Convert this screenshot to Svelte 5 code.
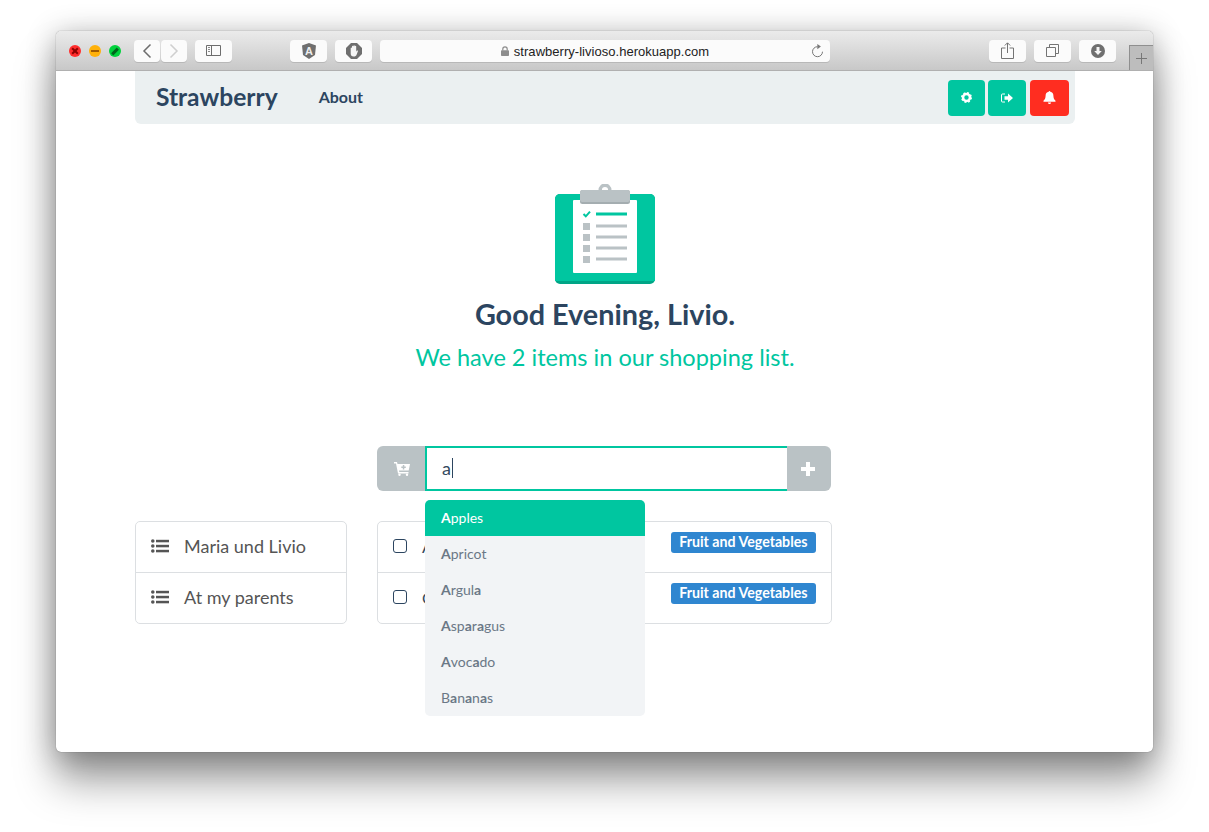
<script>
  const suggestions = ['Apples', 'Apricot', 'Argula', 'Asparagus', 'Avocado', 'Bananas'];
  const lists = ['Maria und Livio', 'At my parents'];
  const items = ['Apples', 'Carrots'];

  // matched letters of the query are drawn heavier
  const parts = (word) => word.split(/(a)/i).filter(Boolean);
</script>

<div class="desktop">
  <div class="window">
    <header class="titlebar">
      <div class="lights">
        <span class="light red"></span>
        <span class="light yellow"></span>
        <span class="light green"></span>
      </div>
      <div class="nav-buttons">
        <span class="tb back">
          <svg width="10" height="16" viewBox="0 0 10 16"><path d="M8.500 1.500 2 8l6.500 6.500" fill="none" stroke="#6d6d6d" stroke-width="1.500"/></svg>
        </span>
        <span class="tb back">
          <svg width="10" height="16" viewBox="0 0 10 16"><path d="M1.500 1.500 8 8l-6.500 6.500" fill="none" stroke="#cfcfcf" stroke-width="1.500"/></svg>
        </span>
      </div>
      <span class="tb wide sidebar">
        <svg width="15" height="11" viewBox="0 0 15 11"><path d="M.5.5h14v10H.5zM5.500.5v10" fill="none" stroke="#6d6d6d"/><path d="M2 2.500h2M2 4.500h2M2 6.500h2" stroke="#8a8a8a"/></svg>
      </span>
      <span class="tb wide angular">
        <svg width="14" height="16" viewBox="0 0 14 16">
          <path d="M7 0 14 2.500 13 12 7 16 1 12 0 2.500z" fill="#6f6f6f"/>
          <text x="7" y="12" text-anchor="middle" class="shield-letter">A</text>
        </svg>
      </span>
      <span class="tb wide hand">
        <svg width="16" height="16" viewBox="0 0 16 16">
          <path d="M5 0h6l5 5v6l-5 5H5l-5-5V5z" fill="#6f6f6f"/>
          <path d="M4.700 5.200c0-1 1.300-1 1.300 0V3.400c0-1 1.400-1 1.400 0V2.900c0-1 1.400-1 1.400 0v.7c0-1 1.400-1 1.400 0v5.200l.5-1c.5-.8 1.500-.3 1.200.5l-1.300 3.400c-.4 1-1.300 1.800-2.900 1.800H7.500C5.700 13.500 4.700 12.400 4.700 10.500z" fill="#f5f5f5"/>
        </svg>
      </span>
      <div class="url">
        <svg class="lock" width="8" height="10" viewBox="0 0 8 10"><path d="M1.800 4.500V3a2.200 2.200 0 0 1 4.400 0v1.500" fill="none" stroke="#8d8d8d" stroke-width="1.200"/><rect y="4.300" width="8" height="5.700" rx=".8" fill="#8d8d8d"/></svg>
        <span class="host">strawberry-livioso.herokuapp.com</span>
        <svg class="reload" width="13" height="14" viewBox="0 0 13 14"><path d="M6.500 2.700a5 5 0 1 0 5 5" fill="none" stroke="#777" stroke-width="1"/><path d="M6.300 0v5.200l3.600-2.600z" fill="#777"/></svg>
      </div>
      <span class="tb wide share">
        <svg width="13" height="17" viewBox="0 0 13 17"><path d="M4.500 6H.5v10.500h12V6h-4M6.500 11V1M3.800 3.500 6.500.8l2.700 2.700" fill="none" stroke="#747474"/></svg>
      </span>
      <span class="tb wide">
        <svg width="13" height="13" viewBox="0 0 13 13"><path d="M.5 3.500h9v9h-9zM3.500 3.500v-3h9v9h-3" fill="none" stroke="#747474"/></svg>
      </span>
      <span class="tb wide">
        <svg width="14" height="14" viewBox="0 0 14 14"><circle cx="7" cy="7" r="7" fill="#6f6f6f"/><path d="M5.500 3h3v4h2.300L7 11 3.200 7h2.300z" fill="#f5f5f5"/></svg>
      </span>
      <span class="new-tab">
        <svg width="11" height="11" viewBox="0 0 11 11"><path d="M5.500 0v11M0 5.500h11" stroke="#777"/></svg>
      </span>
    </header>

    <main class="page">
      <nav class="navbar">
        <span class="brand">Strawberry</span>
        <a class="nav-link" href="#about">About</a>
        <div class="nav-actions">
          <button class="action teal cog">
            <svg width="11" height="11" viewBox="0 0 12 12">
              <circle cx="6" cy="6" r="3.800" fill="none" stroke="#fff" stroke-width="2.800"/>
              <circle cx="6" cy="6" r="5" fill="none" stroke="#fff" stroke-width="2" stroke-dasharray="2 1.930"/>
            </svg>
          </button>
          <button class="action teal logout">
            <svg width="12" height="10" viewBox="0 0 12 10">
              <path d="M4 1H1.500a1 1 0 0 0-1 1v6a1 1 0 0 0 1 1H4" fill="none" stroke="#fff"/>
              <path d="M3.500 3.300h3.500V.6L12 5 7 9.400V6.700H3.500z" fill="#fff"/>
            </svg>
          </button>
          <button class="action red-btn">
            <svg width="13" height="13" viewBox="0 0 13 13">
              <path d="M6.500 0c.5 0 .8.300.8.800 2 .4 3.100 1.900 3.100 4 0 2.300.8 3.800 2.100 5v.9H.5v-.9c1.300-1.200 2.100-2.700 2.100-5 0-2.100 1.100-3.600 3.100-4 0-.5.300-.8.800-.8zM4.900 11.500h3.200c0 .9-.7 1.500-1.600 1.500s-1.600-.6-1.600-1.500z" fill="#fff"/>
            </svg>
          </button>
        </div>
      </nav>

      <section class="hero">
        <svg class="clipboard" width="100" height="100" viewBox="0 0 100 100">
          <rect y="10" width="100" height="90" rx="5" fill="#00a586"/>
          <path d="M5 10h90a5 5 0 0 1 5 5v82H0V15a5 5 0 0 1 5-5z" fill="#00c6a0"/>
          <rect x="18" y="16" width="64" height="73" rx="1" fill="#fff"/>
          <circle cx="50" cy="6" r="4.800" fill="none" stroke="#bac2c5" stroke-width="3.400"/>
          <rect x="25" y="6" width="50" height="14" rx="2.500" fill="#a4adb0"/>
          <rect x="25" y="6" width="50" height="12" rx="2.500" fill="#bac2c5"/>
          <path d="M28.500 30l2.300 2.300 4.200-4.600" fill="none" stroke="#00c6a0" stroke-width="2"/>
          <rect x="41" y="28.500" width="31" height="3" fill="#00c6a0"/>
          <g fill="#bac2c5">
            <rect x="28" y="39" width="7" height="7"/>
            <rect x="41" y="40.500" width="31" height="3"/>
            <rect x="28" y="50" width="7" height="7"/>
            <rect x="41" y="51.500" width="31" height="3"/>
            <rect x="28" y="61" width="7" height="7"/>
            <rect x="41" y="62.500" width="31" height="3"/>
            <rect x="28" y="72" width="7" height="7"/>
            <rect x="41" y="73.500" width="31" height="3"/>
          </g>
        </svg>
        <h1>Good Evening, Livio.</h1>
        <p class="lead">We have 2 items in our shopping list.</p>
      </section>

      <div class="content">
        <ul class="lists">
          {#each lists as list}
            <li>
              <svg width="18" height="14" viewBox="0 0 18 14" fill="#555">
                <circle cx="1.800" cy="2" r="1.800"/><rect x="5" y=".8" width="13" height="2.500"/>
                <circle cx="1.800" cy="7" r="1.800"/><rect x="5" y="5.800" width="13" height="2.500"/>
                <circle cx="1.800" cy="12" r="1.800"/><rect x="5" y="10.800" width="13" height="2.500"/>
              </svg>
              {list}
            </li>
          {/each}
        </ul>

        <div class="shopping">
          <div class="add-item">
            <span class="addon left">
              <svg width="16" height="14" viewBox="0 0 16 14" fill="#fff">
                <path d="M0 0h3l.5 2H16l-1.300 6.500H5l.3 1.500H14.500v1.500H4L2 1.500H0zM8.800 3v1.500H7.300V6h1.500v1.500h1.500V6h1.500V4.500h-1.500V3z" fill-rule="evenodd"/>
                <circle cx="5.500" cy="12.800" r="1.200"/><circle cx="13" cy="12.800" r="1.200"/>
              </svg>
            </span>
            <div class="field">a<span class="caret"></span></div>
            <span class="addon right">
              <svg width="14" height="14" viewBox="0 0 14 14"><path d="M5 0h4v5h5v4H9v5H5V9H0V5h5z" fill="#fff"/></svg>
            </span>

            <ul class="dropdown">
              {#each suggestions as word, i}
                <li class:active={i === 0}>
                  {#each parts(word) as part}{#if part.toLowerCase() === 'a'}<b>{part}</b>{:else}{part}{/if}{/each}
                </li>
              {/each}
            </ul>
          </div>

          <ul class="items">
            {#each items as item}
              <li>
                <span class="check"></span>
                <span class="name">{item}</span>
                <span class="badge">Fruit and Vegetables</span>
              </li>
            {/each}
          </ul>
        </div>
      </div>
    </main>
  </div>
</div>

<style>
  :global(body) {
    background: #fff;
    font-family: Lato, "Open Sans", sans-serif;
  }

  .desktop {
    height: 832px;
    box-sizing: border-box;
    padding: 31px 0 0 56px;
    overflow: hidden;
  }

  .window {
    width: 1097px;
    height: 721px;
    border-radius: 5px;
    background: #fff;
    overflow: hidden;
    box-shadow: 0 30px 40px rgba(0, 0, 0, 0.36), 0 4px 30px rgba(0, 0, 0, 0.3), 0 0 1px rgba(0, 0, 0, 0.6);
  }

  /* Safari chrome */
  .titlebar {
    height: 40px;
    box-sizing: border-box;
    display: flex;
    align-items: center;
    padding-left: 13px;
    background: linear-gradient(#ebebeb, #c8c8c8);
    border-bottom: 1px solid #b0b0b0;
  }

  .lights {
    display: flex;
    gap: 8px;
    margin-right: 13px;
  }

  .light {
    width: 12px;
    height: 12px;
    border-radius: 50%;
    position: relative;
  }

  .light.red { background: #ff2d2d; }
  .light.yellow { background: #ffb10a; }
  .light.green { background: #00d23c; }

  .light::after,
  .light.red::before {
    content: '';
    position: absolute;
    left: 2px;
    top: 5px;
    width: 8px;
    height: 2px;
    background: #a05a00;
  }

  .light.red::after { background: #8c0000; transform: rotate(45deg); }
  .light.red::before { background: #8c0000; transform: rotate(-45deg); }
  .light.green::after { background: #00651c; height: 3px; transform: rotate(-45deg); }

  .nav-buttons {
    display: flex;
    gap: 1px;
    margin-right: 8px;
  }

  .tb {
    height: 22px;
    display: flex;
    align-items: center;
    justify-content: center;
    background: #fbfbfb;
    border-radius: 4px;
    box-shadow: 0 1px 0 #b8b8b8;
  }

  .tb.back { width: 26px; }
  .tb.wide { width: 37px; margin-right: 8px; }
  .tb.sidebar { margin-right: 58px; }
  .tb.share { margin-left: 151px; }

  .shield-letter {
    font: 700 11px "Liberation Sans", sans-serif;
    fill: #eee;
  }

  .url {
    width: 450px;
    height: 22px;
    flex: none;
    margin-right: 8px;
    box-sizing: border-box;
    display: flex;
    align-items: center;
    justify-content: center;
    gap: 5px;
    position: relative;
    background: #fbfbfb;
    border-radius: 4px;
    box-shadow: 0 1px 0 #b8b8b8;
    font: 13px "Liberation Sans", sans-serif;
    color: #222;
  }

  .host {
    padding-top: 1px;
    letter-spacing: 0.03px;
  }

  .reload {
    position: absolute;
    right: 6px;
    top: 4px;
  }

  .new-tab {
    width: 24px;
    height: 25px;
    box-sizing: border-box;
    margin-left: 5px;
    align-self: flex-end;
    display: flex;
    align-items: center;
    justify-content: center;
    background: #bdbdbd;
    border: 1px solid #8f8f8f;
    border-right: 0;
    border-bottom: 0;
  }

  /* Page */
  .page {
    width: 940px;
    margin-left: 79px;
  }

  .navbar {
    height: 53px;
    display: flex;
    align-items: center;
    padding: 0 6px 0 21px;
    background: #ebf0f1;
    border-radius: 0 0 6px 6px;
    color: #2c4560;
  }

  .brand {
    font-size: 24.600px;
    font-weight: 700;
    margin-right: 41px;
    padding-bottom: 2px;
  }

  .nav-link {
    font-size: 16px;
    font-weight: 700;
    color: inherit;
    text-decoration: none;
    padding-bottom: 2px;
  }

  .nav-actions {
    display: flex;
    gap: 3px;
    margin-left: auto;
  }

  .action {
    width: 38px;
    height: 36px;
    padding: 0;
    border: 0;
    border-radius: 4px;
    display: flex;
    align-items: center;
    justify-content: center;
  }

  .action.teal { background: #00c6a0; }
  .action.red-btn { background: #ff2d20; width: 39px; margin-left: 1px; }
  .action.cog { width: 37px; }

  .hero {
    display: flex;
    flex-direction: column;
    align-items: center;
    padding-top: 60px;
  }

  .clipboard {
    display: block;
  }

  h1 {
    margin: 12px 0 0;
    font-size: 28.800px;
    line-height: 36px;
    font-weight: 700;
    color: #2c4560;
  }

  .lead {
    margin: 9px 0 0;
    font-size: 23.550px;
    line-height: 32px;
    color: #00c6a0;
  }

  .content {
    display: flex;
    gap: 30px;
    margin-top: 73px;
    align-items: flex-start;
  }

  ul {
    list-style: none;
    margin: 0;
    padding: 0;
  }

  .lists {
    width: 212px;
    margin-top: 75px;
    box-sizing: border-box;
    border: 1px solid #dcdfe2;
    border-radius: 5px;
    color: #555;
    font-size: 18px;
  }

  .lists li {
    height: 50px;
    box-sizing: border-box;
    display: flex;
    align-items: center;
    gap: 15px;
    padding: 0 0 3px 15px;
  }

  .lists li + li {
    height: 51px;
    border-top: 1px solid #dcdfe2;
  }

  .shopping {
    width: 454px;
  }

  .add-item {
    height: 45px;
    display: flex;
    position: relative;
  }

  .addon {
    display: flex;
    align-items: center;
    justify-content: center;
    background: #bac2c5;
  }

  .addon.left { width: 48px; padding-left: 2px; box-sizing: border-box; border-radius: 6px 0 0 6px; }
  .addon.right { width: 44px; border-radius: 0 6px 6px 0; padding-right: 2px; box-sizing: border-box; }

  .field {
    flex: 1;
    box-sizing: border-box;
    display: flex;
    align-items: center;
    padding: 0 0 2px 15px;
    border: 2px solid #00c6a0;
    border-right: 0;
    font-size: 18px;
    color: #34495e;
  }

  .caret {
    width: 1px;
    height: 20px;
    margin-left: 1px;
    background: #2c4560;
  }

  .dropdown {
    position: absolute;
    left: 48px;
    top: 54px;
    z-index: 2;
    width: 220px;
    background: #f2f4f6;
    border-radius: 5px;
    overflow: hidden;
    font-size: 14px;
    color: #6b7886;
  }

  .dropdown li {
    height: 36px;
    box-sizing: border-box;
    display: flex;
    align-items: center;
    padding: 0 0 2px 16px;
  }

  .dropdown li.active {
    background: #00c6a0;
    color: #fff;
  }

  .dropdown b {
    font-weight: 700;
  }

  .items {
    width: 455px;
    box-sizing: border-box;
    margin-top: 30px;
    border: 1px solid #dcdfe2;
    border-radius: 5px;
  }

  .items li {
    height: 50px;
    box-sizing: border-box;
    display: flex;
    align-items: center;
    padding: 0 15px 2px 15px;
    font-size: 16px;
    color: #34495e;
  }

  .items li + li {
    border-top: 1px solid #dcdfe2;
    height: 51px;
  }

  .check {
    width: 14px;
    height: 14px;
    box-sizing: border-box;
    border: 1.500px solid #2c4560;
    border-radius: 3px;
    margin-right: 15px;
  }

  .badge {
    margin-left: auto;
    margin-top: -7px;
    padding: 0 8.500px;
    height: 21px;
    line-height: 20px;
    background: #2f86d0;
    border-radius: 3px;
    color: #fff;
    font-size: 14.200px;
    font-weight: 700;
  }
</style>
